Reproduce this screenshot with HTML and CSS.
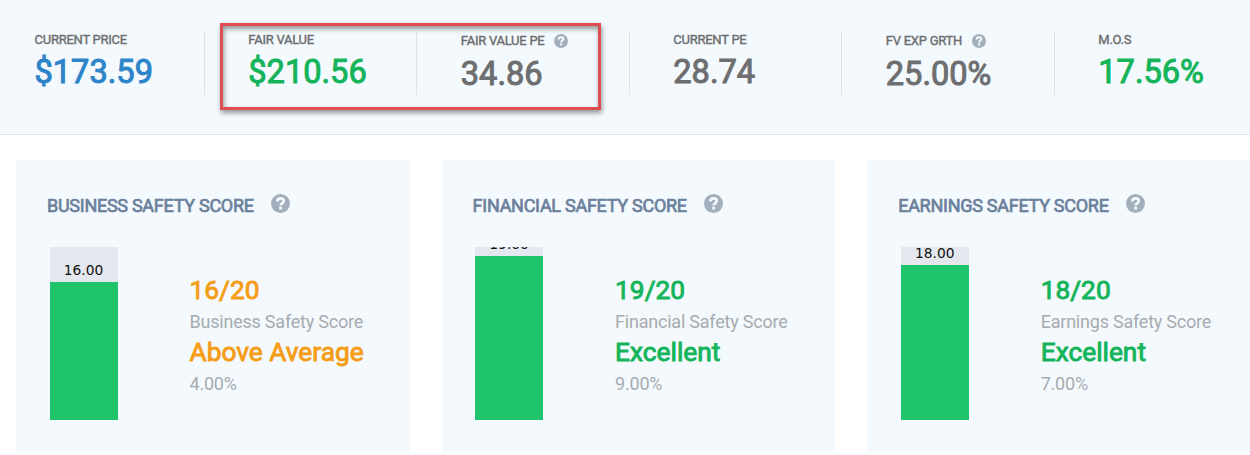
FILE: index.html
```html
<!DOCTYPE html>
<html lang="en">
<head>
    <meta charset="UTF-8">
    <meta name="viewport" content="width=device-width, initial-scale=1.0">
    <title>Stock Valuation</title>
    <link rel="stylesheet" href="styles.css">
</head>
<body>
    <svg class="icon-defs" width="0" height="0">
        <symbol id="help" viewBox="0 0 20 20">
            <circle cx="10" cy="10" r="10" fill="currentColor"/>
            <path d="M6.7 7.9C6.7 5.7 8.1 4.6 10 4.6s3.4 1 3.4 2.7c0 2.3-3.2 2.2-3.2 4.7" fill="none" stroke="#f3f9fd" stroke-width="2.9"/>
            <rect x="8.6" y="13.4" width="3.1" height="2.9" fill="#f3f9fd"/>
        </symbol>
    </svg>

    <div class="price-bar">
        <div class="price-item">
            <div class="price-label">CURRENT PRICE</div>
            <div class="price-value blue">$173.59</div>
        </div>
        <div class="price-item">
            <div class="price-label">FAIR VALUE</div>
            <div class="price-value green">$210.56</div>
        </div>
        <div class="price-item with-help">
            <div class="price-label">FAIR VALUE PE <svg class="help-icon"><use href="#help"/></svg></div>
            <div class="price-value">34.86</div>
        </div>
        <div class="price-item">
            <div class="price-label">CURRENT PE</div>
            <div class="price-value">28.74</div>
        </div>
        <div class="price-item with-help">
            <div class="price-label">FV EXP GRTH <svg class="help-icon"><use href="#help"/></svg></div>
            <div class="price-value">25.00%</div>
        </div>
        <div class="price-item">
            <div class="price-label">M.O.S</div>
            <div class="price-value green">17.56%</div>
        </div>
        <div class="highlight"></div>
    </div>

    <div class="score-cards">
        <div class="score-card">
            <h3 class="score-title">BUSINESS SAFETY SCORE <svg class="help-icon"><use href="#help"/></svg></h3>
            <div class="score-body">
                <div class="score-bar">
                    <span class="bar-label">16.00</span>
                    <div class="bar-fill" style="height: 138px"></div>
                </div>
                <div class="score-info">
                    <p class="score-value orange">16/20</p>
                    <p class="score-text">Business Safety Score</p>
                    <p class="score-value orange">Above Average</p>
                    <p class="score-text">4.00%</p>
                </div>
            </div>
        </div>
        <div class="score-card">
            <h3 class="score-title">FINANCIAL SAFETY SCORE <svg class="help-icon"><use href="#help"/></svg></h3>
            <div class="score-body">
                <div class="score-bar">
                    <span class="bar-label">19.00</span>
                    <div class="bar-fill" style="height: 164px"></div>
                </div>
                <div class="score-info">
                    <p class="score-value green">19/20</p>
                    <p class="score-text">Financial Safety Score</p>
                    <p class="score-value green">Excellent</p>
                    <p class="score-text">9.00%</p>
                </div>
            </div>
        </div>
        <div class="score-card">
            <h3 class="score-title">EARNINGS SAFETY SCORE <svg class="help-icon"><use href="#help"/></svg></h3>
            <div class="score-body">
                <div class="score-bar">
                    <span class="bar-label">18.00</span>
                    <div class="bar-fill" style="height: 155px"></div>
                </div>
                <div class="score-info">
                    <p class="score-value green">18/20</p>
                    <p class="score-text">Earnings Safety Score</p>
                    <p class="score-value green">Excellent</p>
                    <p class="score-text">7.00%</p>
                </div>
            </div>
        </div>
    </div>
</body>
</html>
```
FILE: styles.css
```css
* {
    box-sizing: border-box;
}

body {
    margin: 0;
    background: #fff;
    font-family: Roboto, sans-serif;
    overflow: hidden;
}

.icon-defs {
    display: none;
}

.price-bar {
    position: relative;
    display: grid;
    grid-template-columns: 204.8px repeat(5, 212.5px);
    height: 135px;
    padding-top: 31px;
    background: #f3f9fd;
    border-bottom: 1px solid #dae5ec;
    overflow: hidden;
}

.price-item {
    height: 64px;
    padding-left: 43.5px;
    border-right: 1px solid #dde3ea;
}

.price-item:first-child {
    padding-left: 34.5px;
}

.price-label {
    display: flex;
    align-items: center;
    height: 17px;
    font-size: 13px;
    letter-spacing: -0.25px;
    color: #6d6e70;
    -webkit-text-stroke: 0.4px;
}

.price-value {
    font-size: 32.6px;
    line-height: 48px;
    color: #6d6e70;
    -webkit-text-stroke: 1px;
}

.with-help .price-label {
    height: 19px;
}

.help-icon {
    width: 14px;
    height: 14px;
    margin-left: 9.5px;
    color: #a3afbd;
}

.blue {
    color: #2d84c8;
}

.green {
    color: #14b45a;
}

.orange {
    color: #f59d17;
}

.highlight {
    position: absolute;
    left: 220px;
    top: 23px;
    width: 381px;
    height: 87px;
    border: 3px solid #dc4e52;
    box-shadow: 1px 3px 5px rgba(0, 0, 0, 0.4), inset 1px 3px 5px rgba(0, 0, 0, 0.4);
}

.score-cards {
    display: grid;
    grid-template-columns: repeat(3, 393.6px);
    gap: 32px;
    padding: 25px 0 0 16px;
}

.score-card {
    height: 292px;
    padding: 34px 0 0 31px;
    background: #f3f9fd;
}

.score-title {
    display: flex;
    align-items: center;
    height: 22px;
    margin: 0 0 31px;
    font-size: 18px;
    font-weight: 400;
    letter-spacing: -0.27px;
    color: #6b819c;
    -webkit-text-stroke: 0.7px;
}

.score-title .help-icon {
    width: 19px;
    height: 19px;
    margin: 0 0 3px 17px;
}

.score-body {
    display: flex;
    padding-left: 2.5px;
}

.score-bar {
    display: flex;
    flex-direction: column;
    justify-content: flex-end;
    width: 68px;
    height: 173px;
    background: #e4e7ee;
    overflow: hidden;
}

.bar-label {
    flex-shrink: 0;
    margin-bottom: 4px;
    font-family: "DejaVu Sans", sans-serif;
    font-size: 13.8px;
    line-height: 16px;
    text-align: center;
    color: #111;
}

.bar-fill {
    flex-shrink: 0;
    background: #20c46b;
}

.score-info {
    padding: 27px 0 0 72px;
}

.score-info p {
    margin: 0;
}

.score-info .score-value {
    font-size: 26.3px;
    line-height: 32px;
    -webkit-text-stroke: 0.9px;
}

.score-info .score-text {
    padding-top: 1px;
    font-size: 18px;
    line-height: 29px;
    letter-spacing: -0.22px;
    color: #a7abb0;
}
```
